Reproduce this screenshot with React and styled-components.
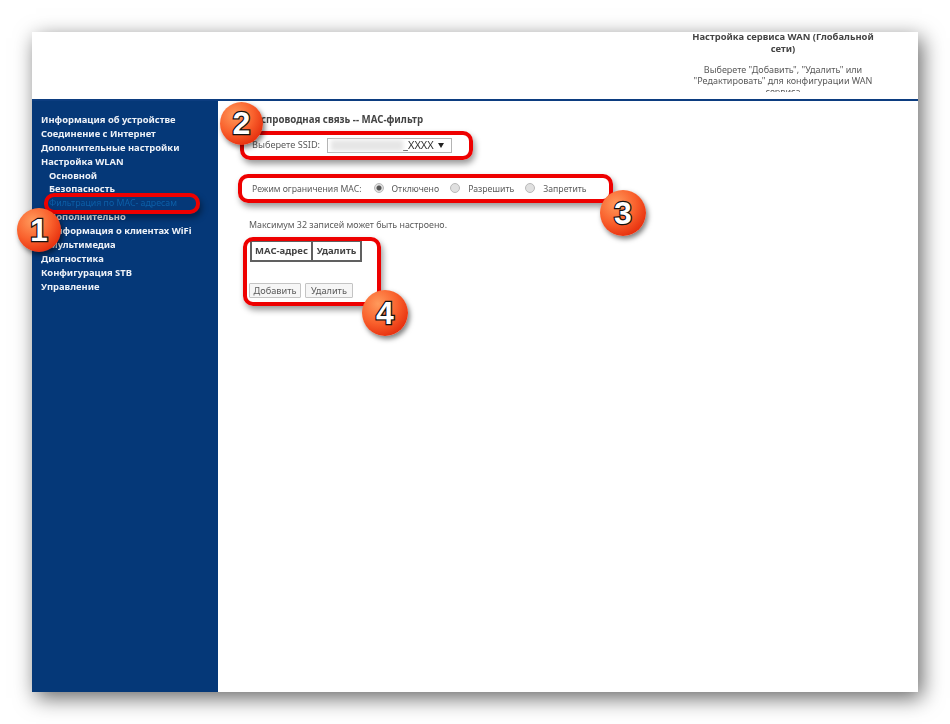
import React from "react";
import styled, { createGlobalStyle } from "styled-components";

const GlobalStyle = createGlobalStyle`
  html, body {
    margin: 0;
    padding: 0;
    background: #ffffff;
  }
  body {
    font-family: "Noto Sans", "Liberation Sans", sans-serif;
  }
`;

const Page = styled.div`
  width: 950px;
  height: 724px;
  padding: 32px 0 0 32px;
  box-sizing: border-box;
  overflow: hidden;
`;

const Window = styled.div`
  position: relative;
  width: 886px;
  height: 660px;
  background: #ffffff;
  box-shadow: 4px 6px 20px rgba(0, 0, 0, 0.6);
  display: flex;
  flex-direction: column;
`;

const Header = styled.header`
  height: 69px;
  box-sizing: border-box;
  border-bottom: 2px solid #0c3d80;
  display: flex;
  justify-content: flex-end;
  padding-right: 35px;
`;

const HeaderInfo = styled.div`
  width: 200px;
  height: 60px;
  clip-path: inset(-2px 0 0 0);
  text-align: center;
  color: #5a5a5a;
  font-size: 9px;
  line-height: 11px;
  filter: blur(0.3px);
`;

const HeaderTitle = styled.div`
  font-size: 9.4px;
  line-height: 12px;
  font-weight: 700;
  color: #444444;
  margin: -1px 0 9px;
`;

const Body = styled.div`
  flex: 1;
  display: flex;
`;

const Sidebar = styled.nav`
  width: 186px;
  background: #053878;
  padding-top: 12px;
  box-sizing: border-box;
  display: flex;
  flex-direction: column;
`;

const NavItem = styled.div`
  height: 13.9px;
  line-height: 14px;
  font-size: ${(p) => (p.$active ? 8.8 : 9.4)}px;
  font-weight: ${(p) => (p.$active ? 400 : 700)};
  white-space: nowrap;
  padding-left: ${(p) => (p.$sub ? 17 : 9)}px;
  color: ${(p) => (p.$active ? "#0c5fa8" : "#eef2f8")};
  filter: blur(0.3px);
`;

const Main = styled.main`
  flex: 1;
  padding: 12px 0 0 31px;
  color: #5a5a5a;
  font-size: 8.9px;
  line-height: 14px;
  filter: blur(0.3px);
`;

const PageTitle = styled.div`
  font-size: 9.7px;
  font-weight: 700;
  color: #444444;
`;

const Row = styled.div`
  display: flex;
  align-items: center;
  height: 16px;
  padding-left: 3px;
  margin-top: ${(p) => p.$top}px;
  font-size: ${(p) => p.$size}px;
`;

const Label = styled.span`
  margin-right: ${(p) => p.$gap}px;
  white-space: nowrap;
`;

const SelectBox = styled.div`
  width: 125px;
  height: 15px;
  box-sizing: border-box;
  border: 1px solid #b4b4b4;
  background: #ffffff;
  display: flex;
  align-items: center;
  color: #333333;
  font-size: 11px;
`;

const Blurred = styled.span`
  width: 72px;
  height: 11px;
  margin: 0 0 0 3px;
  background: #e6e6e6;
  filter: blur(2px);
`;

const Arrow = styled.span`
  margin-left: 4px;
  width: 0;
  height: 0;
  border-left: 3px solid transparent;
  border-right: 3px solid transparent;
  border-top: 5px solid #222222;
`;

const Radio = styled.span`
  width: 10px;
  height: 10px;
  box-sizing: border-box;
  border-radius: 50%;
  border: 1px solid #b8b8b8;
  background: ${(p) =>
    p.$on
      ? "radial-gradient(circle, #555555 0 2px, #e0e0e0 3px)"
      : "#e0e0e0"};
  margin-right: 8px;
  position: relative;
  top: -1px;
`;

const Note = styled.div`
  margin-top: 21px;
`;

const MacTable = styled.table`
  border-collapse: collapse;
  margin: 8px 0 0 1px;
  table-layout: fixed;
  width: 110px;
`;

const Th = styled.th`
  height: 20px;
  padding: 0;
  border: 2px solid #606060;
  font-size: 9.5px;
  font-weight: 700;
  color: #444444;
  box-sizing: border-box;
  white-space: nowrap;
  width: ${(p) => p.$w}px;
`;

const Buttons = styled.div`
  display: flex;
  gap: 4px;
  margin-top: 21px;
`;

const Button = styled.button`
  height: 15px;
  width: ${(p) => p.$w}px;
  padding: 0;
  border: 1px solid #c4c4c4;
  border-radius: 1px;
  background: #f6f6f6;
  color: #5a5a5a;
  font-family: inherit;
  font-size: 9.2px;
  line-height: 13px;
`;

// annotations drawn on top of the screenshot
const Callout = styled.div`
  position: absolute;
  left: ${(p) => p.$x}px;
  top: ${(p) => p.$y}px;
  width: ${(p) => p.$w}px;
  height: ${(p) => p.$h}px;
  box-sizing: border-box;
  border: 4px solid #ee0000;
  border-radius: 10px;
  box-shadow: 2px 4px 6px rgba(0, 0, 0, 0.4);
`;

const Badge = styled.div`
  position: absolute;
  left: ${(p) => p.$x}px;
  top: ${(p) => p.$y}px;
  width: ${(p) => p.$d}px;
  height: ${(p) => p.$d}px;
  border-radius: 50%;
  background: radial-gradient(circle at 35% 30%, #ff9a5c 0%, #f9602c 45%, #e52c0c 80%, #c82206 100%);
  box-shadow: 2px 3px 5px rgba(0, 0, 0, 0.5);
  display: flex;
  align-items: center;
  justify-content: center;
  color: #ffffff;
  font-family: "Liberation Sans", sans-serif;
  font-weight: 700;
  font-size: 32px;
  -webkit-text-stroke: 2.5px #111111;
  paint-order: stroke fill;
`;

const menu = [
  { label: "Информация об устройстве" },
  { label: "Соединение с Интернет" },
  { label: "Дополнительные настройки" },
  { label: "Настройка WLAN" },
  { label: "Основной", sub: true },
  { label: "Безопасность", sub: true },
  { label: "Фильтрация по MAC- адресам", sub: true, active: true },
  { label: "Дополнительно", sub: true },
  { label: "Информация о клиентах WiFi", sub: true },
  { label: "Мультимедиа", sub: true },
  { label: "Диагностика" },
  { label: "Конфигурация STB" },
  { label: "Управление" },
];

const App = () => {
  return (
    <Page>
      <GlobalStyle />
      <Window>
        <Header>
          <HeaderInfo>
            <HeaderTitle>Настройка сервиса WAN (Глобальной сети)</HeaderTitle>
            Выберете "Добавить", "Удалить" или "Редактировать" для конфигурации WAN сервиса
          </HeaderInfo>
        </Header>
        <Body>
          <Sidebar>
            {menu.map((item) => (
              <NavItem key={item.label} $sub={item.sub} $active={item.active}>
                {item.label}
              </NavItem>
            ))}
          </Sidebar>
          <Main>
            <PageTitle>Беспроводная связь -- MAC-фильтр</PageTitle>
            <Row $top={10} $size={9.2}>
              <Label $gap={7}>Выберете SSID:</Label>
              <SelectBox>
                <Blurred />
                _XXXX
                <Arrow />
              </SelectBox>
            </Row>
            <Row $top={28} $size={8.7}>
              <Label $gap={12}>Режим ограничения MAC:</Label>
              <Radio $on />
              <Label $gap={11}>Отключено</Label>
              <Radio />
              <Label $gap={11}>Разрешить</Label>
              <Radio />
              <Label>Запретить</Label>
            </Row>
            <Note>Максимум 32 записей может быть настроено.</Note>
            <MacTable>
              <thead>
                <tr>
                  <Th $w={61}>MAC-адрес</Th>
                  <Th $w={49}>Удалить</Th>
                </tr>
              </thead>
            </MacTable>
            <Buttons>
              <Button $w={52}>Добавить</Button>
              <Button $w={48}>Удалить</Button>
            </Buttons>
          </Main>
        </Body>
        <Callout $x={12} $y={161} $w={156} $h={21} />
        <Callout $x={208} $y={99} $w={233} $h={29} />
        <Callout $x={206} $y={142} $w={375} $h={29} />
        <Callout $x={211} $y={205} $w={138} $h={69} />
        <Badge $x={-15} $y={176} $d={44}>1</Badge>
        <Badge $x={188} $y={70} $d={43}>2</Badge>
        <Badge $x={568} $y={158} $d={46}>3</Badge>
        <Badge $x={330} $y={258} $d={46}>4</Badge>
      </Window>
    </Page>
  );
};

export default App;
